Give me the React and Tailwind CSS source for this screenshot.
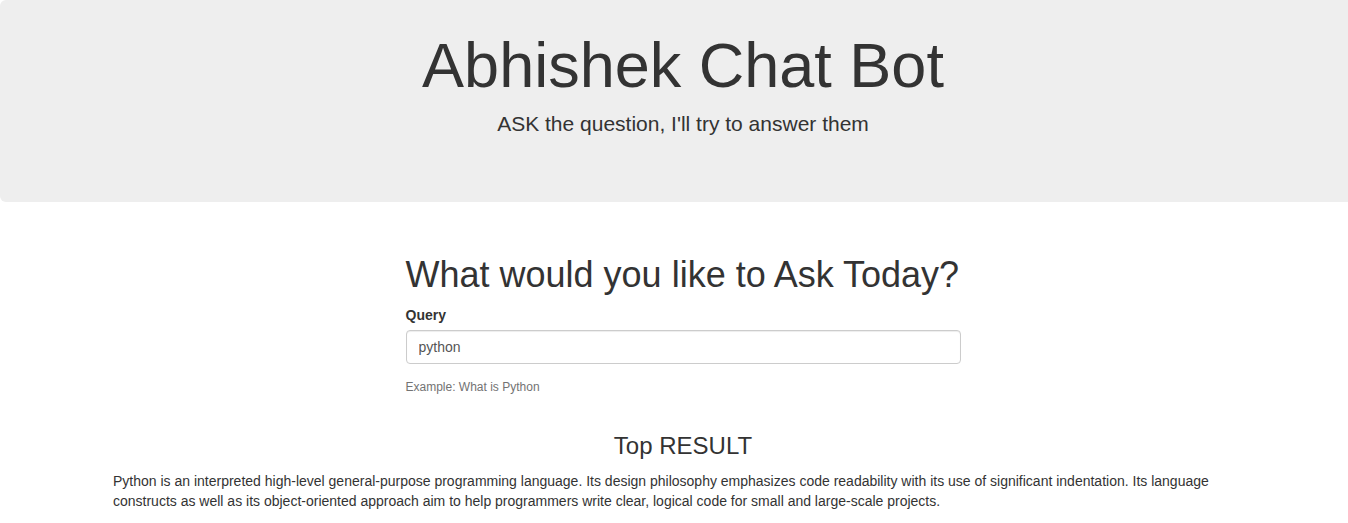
import React, { useState } from 'react';

const ANSWER =
  'Python is an interpreted high-level general-purpose programming language. Its design philosophy emphasizes code readability with its use of significant indentation. Its language constructs as well as its object-oriented approach aim to help programmers write clear, logical code for small and large-scale projects.';

const App = () => {
  const [query, setQuery] = useState('python');

  return (
    <div className="w-full overflow-hidden bg-white text-[#333] font-['Liberation_Sans',Arial,sans-serif] text-[14px] leading-[20px]">
      <div className="w-[1366px]">
        {/* Jumbotron */}
        <div className="bg-[#eeeeee] rounded-[6px] pt-[31px] pb-[48px] text-center">
          <h1 className="text-[63px] leading-[1.1] mb-[9px]">Abhishek Chat Bot</h1>
          <p className="text-[21px] leading-[30px] mb-[15px]">ASK the question, I'll try to answer them</p>
        </div>

        <div className="w-[1140px] mx-auto">
          {/* Query form */}
          <div className="w-[555px] mx-auto mt-[53px]">
            <h1 className="text-[36px] leading-[1.1] mb-[10px]">What would you like to Ask Today?</h1>
            <label htmlFor="query" className="block font-bold mb-[5px]">Query</label>
            <input
              id="query"
              type="text"
              value={query}
              onChange={(e) => setQuery(e.target.value)}
              className="block w-full h-[34px] px-[12px] py-[6px] text-[14px] text-[#555] bg-white border border-[#ccc] rounded-[4px] shadow-[inset_0_1px_1px_rgba(0,0,0,0.075)] outline-none"
            />
            <p className="mt-[15px] text-[12px] leading-[17px] text-[#737373]">Example: What is Python</p>
          </div>

          {/* Result */}
          <h3 className="mt-[37px] mb-[12px] text-center text-[24px] leading-[1.1]">Top RESULT</h3>
          <p>{ANSWER}</p>
        </div>
      </div>
    </div>
  );
};

export default App;
